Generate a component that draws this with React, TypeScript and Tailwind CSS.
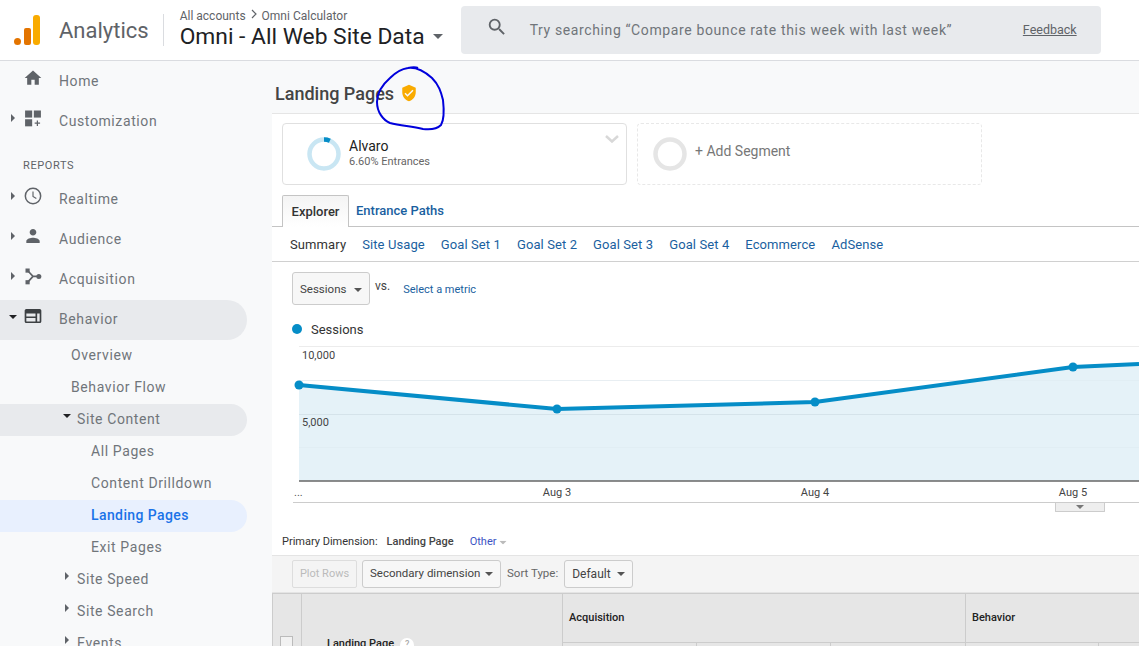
const Caret = ({ dir = "down", className = "" }: { dir?: "down" | "right"; className?: string }) =>
  dir === "down" ? (
    <svg width="10" height="5" viewBox="0 0 10 5" className={className}>
      <path d="M0 0h10L5 5z" fill="currentColor" />
    </svg>
  ) : (
    <svg width="5" height="10" viewBox="0 0 5 10" className={className}>
      <path d="M0 0l5 5-5 5z" fill="currentColor" />
    </svg>
  );

const icons: Record<string, React.ReactNode> = {
  home: <path d="M10 20v-6h4v6h5v-8h3L12 3 2 12h3v8z" />,
  custom: (
    <>
      <rect x="2.5" y="3" width="8.5" height="8.5" />
      <rect x="13" y="3" width="8.5" height="8.5" />
      <rect x="2.5" y="13.5" width="8.5" height="8.5" />
      <path d="M16.5 15h1.5v2.500h2.500v1.500h-2.500v2.500h-1.500v-2.500h-2.500v-1.500h2.500z" />
    </>
  ),
  clock: (
    <>
      <circle cx="12" cy="12" r="9.200" fill="none" stroke="currentColor" strokeWidth="1.800" />
      <path d="M12 6.500V12.500l4 2.400" fill="none" stroke="currentColor" strokeWidth="1.400" />
    </>
  ),
  person: (
    <path d="M12 11.500c2.210 0 4-1.790 4-4s-1.790-4-4-4-4 1.790-4 4 1.790 4 4 4zm0 2.500c-2.670 0-8 1.340-8 4v2.500h16V18c0-2.660-5.330-4-8-4z" />
  ),
  acquisition: (
    <>
      <rect x="3" y="3" width="5" height="5" />
      <rect x="3" y="17" width="5" height="5" />
      <circle cx="19" cy="12.500" r="3" />
      <path d="M6 6l6 6.500h6M6 19l6-6.500" fill="none" stroke="currentColor" strokeWidth="2" />
    </>
  ),
  behavior: (
    <path
      fillRule="evenodd"
      d="M4 3.500h16a2 2 0 0 1 2 2v13a2 2 0 0 1-2 2H4a2 2 0 0 1-2-2v-13a2 2 0 0 1 2-2zM4 9v3.500h11V9zm13 0v9.500h3V9zM4 14.500v4h11v-4z"
    />
  ),
};

const NavItem = ({ label, icon, open, arrow }: { label: string; icon: string; open?: boolean; arrow?: boolean }) => (
  <div className={`flex h-10 w-[247px] items-center rounded-r-[20px] ${open ? "bg-[#e8eaed]" : ""}`}>
    <span className={`flex w-[23px] justify-center pl-[3px] text-[#5f6368] ${open ? "mb-[6px]" : "mb-[8px]"}`}>
      {arrow && (open ? <Caret className="h-[4px] w-[8px] text-[#202124]" /> : <Caret dir="right" className="h-[8px] w-[4px]" />)}
    </span>
    <svg
      width="20"
      height="20"
      viewBox="0 0 24 24"
      fill="currentColor"
      className={`mb-[8px] ${open ? "text-[#3c4043]" : "text-[#5f6368]"}`}
    >
      {icons[icon]}
    </svg>
    <span className="mb-[2px] ml-[16px] text-[14px] tracking-[0.6px] text-[#70757a]">{label}</span>
  </div>
);

const SubItem = ({ label, level, active, arrow, open }: { label: string; level: 1 | 2 | 3; active?: boolean; arrow?: boolean; open?: boolean }) => (
  <div
    className={`flex h-8 w-[247px] items-center rounded-r-[16px] ${active ? "bg-[#e8f0fe]" : ""} ${open ? "bg-[#e8eaed]" : ""} ${
      level === 1 ? "pl-[71px]" : level === 2 ? "pl-[91px]" : "pl-[77px]"
    }`}
  >
    {arrow && (
      <span className="-ml-[14px] mb-[8px] flex w-[14px] items-center text-[#5f6368]">
        {open ? <Caret className="h-[4px] w-[8px] text-[#202124]" /> : <Caret dir="right" className="ml-[2px] h-[8px] w-[4px]" />}
      </span>
    )}
    <span className={`mb-[2px] text-[14px] ${active ? "font-medium tracking-[0.4px] text-[#1a73e8]" : "tracking-[0.6px] text-[#70757a]"}`}>{label}</span>
  </div>
);

const Sidebar = () => (
  <aside className="h-full w-[272px] shrink-0 overflow-hidden bg-[#f8f9fa] pt-[1px]">
    <NavItem label="Home" icon="home" />
    <NavItem label="Customization" icon="custom" arrow />
    <div className="flex h-[38px] items-end pb-[6px] pl-[23px] text-[11px] tracking-[0.6px] text-[#5f6368]">REPORTS</div>
    <NavItem label="Realtime" icon="clock" arrow />
    <NavItem label="Audience" icon="person" arrow />
    <NavItem label="Acquisition" icon="acquisition" arrow />
    <NavItem label="Behavior" icon="behavior" arrow open />
    <SubItem label="Overview" level={1} />
    <SubItem label="Behavior Flow" level={1} />
    <SubItem label="Site Content" level={3} arrow open />
    <SubItem label="All Pages" level={2} />
    <SubItem label="Content Drilldown" level={2} />
    <SubItem label="Landing Pages" level={2} active />
    <SubItem label="Exit Pages" level={2} />
    <SubItem label="Site Speed" level={3} arrow />
    <SubItem label="Site Search" level={3} arrow />
    <SubItem label="Events" level={3} arrow />
  </aside>
);

const Header = () => (
  <header className="flex h-[61px] shrink-0 items-center border-b border-[#dadce0] bg-white">
    <svg width="26" height="30" viewBox="0 0 26 30" className="ml-[14px] shrink-0">
      <circle cx="3.500" cy="26.500" r="3.500" fill="#e37400" />
      <rect x="10" y="13" width="7" height="17" rx="2" fill="#e37400" />
      <rect x="19" y="0" width="7" height="30" rx="3" fill="#f9ab00" />
    </svg>
    <span className="ml-[19px] text-[22px] text-[#5f6368]">Analytics</span>
    <div className="ml-[14px] h-[32px] w-px bg-[#dadce0]" />
    <div className="ml-[16px] w-[281px] shrink-0 pb-[1px]">
      <div className="flex h-[16px] items-center text-[12px] text-[#5f6368]">
        All accounts
        <svg width="8" height="10" viewBox="0 0 8 10" className="mx-[4px] mb-[4px]">
          <path d="M2 1l4 4-4 4" fill="none" stroke="#5f6368" strokeWidth="1.200" />
        </svg>
        Omni Calculator
      </div>
      <div className="-mt-[1px] flex items-center text-[22.800px] leading-[28px] text-[#202124]">
        Omni - All Web Site Data
        <Caret className="mb-[2px] ml-[8px] text-[#5f6368]" />
      </div>
    </div>
    <div className="flex h-[48px] w-[640px] shrink-0 items-center rounded-[4px] bg-[#e8eaed] pl-[25px] pr-[24px]">
      <svg width="22" height="22" viewBox="0 0 24 24" fill="#5f6368" className="mb-[7px] shrink-0">
        <path d="M15.500 14h-.790l-.280-.270A6.470 6.470 0 0 0 16 9.500 6.500 6.500 0 1 0 9.500 16c1.610 0 3.090-.590 4.230-1.570l.270.280v.790l5 4.990L20.490 19l-4.990-5zm-6 0C7.010 14 5 11.990 5 9.500S7.010 5 9.500 5 14 7.010 14 9.500 11.990 14 9.500 14z" />
      </svg>
      <span className="ml-[22px] text-[14px] tracking-[0.62px] text-[#70757a]">Try searching “Compare bounce rate this week with last week”</span>
      <span className="ml-auto text-[12.500px] text-[#5f6368] underline">Feedback</span>
    </div>
  </header>
);

const SegmentCard = ({ dashed, children }: { dashed?: boolean; children: React.ReactNode }) => (
  <div
    className={`relative flex h-[62px] w-[345px] items-center rounded-[4px] border ${dashed ? "border-dashed border-[#e8e8e8]" : "border-[#e0e0e0]"}`}
  >
    {children}
  </div>
);

const Ring = ({ color, pct, pctColor }: { color: string; pct?: number; pctColor?: string }) => (
  <svg width="34" height="34" viewBox="0 0 34 34" className="shrink-0">
    <circle cx="17" cy="17" r="14.500" fill="none" stroke={color} strokeWidth="4.500" />
    {pct && (
      <circle
        cx="17"
        cy="17"
        r="14.500"
        fill="none"
        stroke={pctColor}
        strokeWidth="4.500"
        strokeDasharray={`${(pct / 100) * 91} 91`}
        transform="rotate(-90 17 17)"
      />
    )}
  </svg>
);

const goalTabs = ["Site Usage", "Goal Set 1", "Goal Set 2", "Goal Set 3", "Goal Set 4", "Ecommerce", "AdSense"];

const Chart = () => (
  <svg width="840" height="156" viewBox="0 0 840 156" className="ml-[27px] overflow-visible font-['Roboto',sans-serif]">
    <path d="M0 .5H840" stroke="#ececec" />
    <path d="M0 34.500H840M0 101.500H840" stroke="#f2f2f2" />
    <path d="M0 39L258 63 516 56 774 21 840 18V135H0z" fill="#e5f2f8" />
    <path d="M0 34.500H840M0 101.500H840" stroke="#dfecf2" opacity="0.5" />
    <path d="M0 68.500H840" stroke="#d5e3ea" />
    <path d="M0 39L258 63 516 56 774 21 840 18" fill="none" stroke="#058dc7" strokeWidth="4" />
    {[
      [0, 39],
      [258, 63],
      [516, 56],
      [774, 21],
    ].map(([x, y]) => (
      <circle key={x} cx={x} cy={y} r="4.500" fill="#058dc7" />
    ))}
    <path d="M0 135H840" stroke="#666" strokeWidth="1.500" />
    <text x="3" y="13" fontSize="11" fill="#444">10,000</text>
    <text x="3" y="80" fontSize="11" fill="#444">5,000</text>
    <text x="-5" y="150" fontSize="11" fill="#555">...</text>
    <text x="258" y="150" fontSize="11" fill="#444" textAnchor="middle">Aug 3</text>
    <text x="516" y="150" fontSize="11" fill="#444" textAnchor="middle">Aug 4</text>
    <text x="774" y="150" fontSize="11" fill="#444" textAnchor="middle">Aug 5</text>
  </svg>
);

const SelectButton = ({ label, className = "" }: { label: string; className?: string }) => (
  <div
    className={`flex items-center justify-between whitespace-nowrap rounded-[3px] border border-[#ccc] bg-[#f7f7f7] pl-[7px] pr-[7px] text-[#444] ${className}`}
  >
    {label}
    <Caret className="h-[4px] w-[8px] text-[#555]" />
  </div>
);

const Main = () => (
  <main className="relative min-w-0 flex-1 overflow-hidden bg-white">
    <div className="flex h-[53px] items-center border-b border-[#e5e5e5] bg-[#f8f9fa] pl-[3px]">
      <h1 className="mt-[14px] text-[18px] font-medium leading-none text-[#444]">Landing Pages</h1>
      <svg width="18" height="18" viewBox="0 0 24 24" className="ml-[6px] mt-[11px]" fill="#f9ab00">
        <path d="M12 1L3 5v6c0 5.550 3.840 10.740 9 12 5.160-1.260 9-6.450 9-12V5l-9-4zm-2 16l-4-4 1.410-1.410L10 14.170l6.590-6.590L18 9l-8 8z" />
      </svg>
    </div>

    <div className="flex gap-[10px] pl-[10px] pt-[9px]">
      <SegmentCard>
        <div className="ml-[24px]">
          <Ring color="#c9e6f3" pct={6.6} pctColor="#058dc7" />
        </div>
        <div className="mb-[2px] ml-[8px]">
          <div className="text-[14px] leading-[17px] text-[#222]">Alvaro</div>
          <div className="text-[11px] leading-[14px] text-[#666]">6.60% Entrances</div>
        </div>
        <svg width="14" height="8" viewBox="0 0 14 8" className="absolute right-[7px] top-[11px]">
          <path d="M1 1l6 5.500L13 1" fill="none" stroke="#d8d8d8" strokeWidth="2.500" />
        </svg>
      </SegmentCard>
      <SegmentCard dashed>
        <div className="ml-[15px]">
          <Ring color="#e5e5e5" />
        </div>
        <span className="mb-[6px] ml-[8px] text-[14px] text-[#777]">+ Add Segment</span>
      </SegmentCard>
    </div>

    <div className="mt-[10px] flex h-[32px] border-b border-[#c4c4c4] pl-[10px]">
      <div className="-mb-px flex h-[32px] w-[67px] items-center justify-center rounded-t-[2px] border border-b-0 border-[#c4c4c4] bg-gradient-to-b from-[#f4f4f4] to-white pt-[1px] text-[13px] font-medium text-[#333]">
        Explorer
      </div>
      <div className="ml-[7px] flex items-center pt-[1px] text-[13px] font-medium text-[#1a5fa0]">Entrance Paths</div>
    </div>

    <div className="flex h-[35px] items-center gap-[16px] border-b border-[#d0d0d0] pl-[18px] pt-[1px] text-[13px] tracking-[0.1px] text-[#1a5fa0]">
      <span className="text-[#333]">Summary</span>
      {goalTabs.map((t) => (
        <span key={t}>{t}</span>
      ))}
    </div>

    <div className="ml-[20px] mt-[10px] flex items-start">
      <SelectButton label="Sessions" className="h-[33px] w-[78px] pt-[2px] text-[11.500px]" />
      <span className="ml-[5px] mt-[8px] text-[12px] leading-[12px] text-[#444]">vs.</span>
      <span className="ml-[13px] mt-[11px] text-[11px] leading-[14px] text-[#1a5fa0]">Select a metric</span>
    </div>

    <div className="ml-[20px] mt-[16px] flex h-[16px] items-center">
      <span className="h-[10px] w-[10px] rounded-full bg-[#058dc7]" />
      <span className="ml-[9px] pt-[1px] text-[13px] text-[#333]">Sessions</span>
    </div>

    <div className="mt-[9px] h-[156px]">
      <Chart />
    </div>

    <div className="ml-[21px] border-t border-[#ccc]">
      <div className="ml-[762px] flex h-[9px] w-[50px] justify-center rounded-b-[1px] border border-t-0 border-[#ccc] bg-[#eee] pt-[2px] text-[#777]">
        <Caret className="h-[4px] w-[8px]" />
      </div>
    </div>

    <div className="mt-[21px] flex h-[18px] items-center pl-[10px] text-[11px]">
      <span className="text-[#333]">Primary Dimension:</span>
      <span className="ml-[9px] font-medium text-[#444]">Landing Page</span>
      <span className="ml-[16px] text-[#3b54c4]">Other</span>
      <Caret className="ml-[2px] scale-75 text-[#bbb]" />
    </div>

    <div className="mt-[4px] flex h-[38px] items-center border-y border-[#e4e4e4] bg-[#f4f4f4] pl-[20px]">
      <div className="flex h-[28px] w-[65px] items-center justify-center rounded-[2px] border border-[#ddd] text-[11px] text-[#bbb]">
        Plot Rows
      </div>
      <SelectButton label="Secondary dimension" className="ml-[5px] h-[28px] w-[139px] text-[11.500px]" />
      <span className="ml-[6px] text-[11.500px] text-[#666]">Sort Type:</span>
      <SelectButton label="Default" className="ml-[6px] h-[28px] w-[69px] text-[12px]" />
    </div>

    <div className="grid h-[60px] grid-cols-[29px_261px_403px_1fr] border-l border-t border-[#ccc] bg-[#e6e6e6] text-[11px] font-medium text-[#222]">
      <div className="flex items-end justify-center border-r border-[#ccc] pr-[2px]">
        <span className="mb-[5px] h-[13px] w-[13px] border border-[#bbb] bg-[#f2f2f2]" />
      </div>
      <div className="flex items-end border-r border-[#ccc] pl-[25px]">
        <span className="mb-[2px]">Landing Page</span>
        <span className="mb-[2px] ml-[6px] flex h-[14px] w-[14px] items-center justify-center rounded-full bg-white text-[9px] text-[#aaa]">?</span>
      </div>
      <div className="border-r border-[#ccc]">
        <div className="flex h-[49px] items-center border-b border-[#ccc] pl-[6px]">Acquisition</div>
        <div className="grid grid-cols-3 divide-x divide-[#ccc]">
          <span className="h-[11px]" />
          <span className="h-[11px]" />
          <span className="h-[11px]" />
        </div>
      </div>
      <div>
        <div className="flex h-[49px] items-center border-b border-[#ccc] pl-[6px]">Behavior</div>
        <div className="grid grid-cols-[133px_1fr] divide-x divide-[#ccc]">
          <span className="h-[11px]" />
          <span className="h-[11px]" />
        </div>
      </div>
    </div>
  </main>
);

export default function App() {
  return (
    <div className="relative flex h-[646px] w-[1139px] flex-col overflow-hidden bg-white font-['Roboto',sans-serif]">
      <Header />
      <div className="flex min-h-0 flex-1">
        <Sidebar />
        <Main />
      </div>
      {/* hand-drawn marker circle on top of the screenshot */}
      <svg width="80" height="72" viewBox="370 62 80 72" className="absolute left-[370px] top-[62px]">
        <path
          d="M408 68c8-1 16 3 24 10 7 7 9 14 11 22 1 9 1 20-2 25-4 4-10 5-18 4-12-3-22-3-33-6-7-3-13-11-13-21 0-8 5-17 13-24 5-5 11-9 18-10 4-1 8-1 10 0"
          fill="none"
          stroke="#0000dc"
          strokeWidth="2"
        />
      </svg>
    </div>
  );
}
